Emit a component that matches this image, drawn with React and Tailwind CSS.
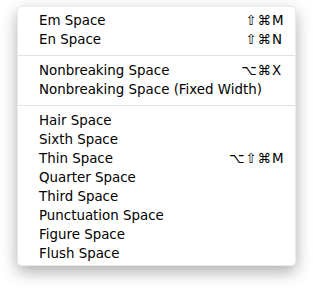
import React from "react";

const groups = [
  [
    { label: "Em Space", mods: "⇧⌘", key: "M" },
    { label: "En Space", mods: "⇧⌘", key: "N" },
  ],
  [
    { label: "Nonbreaking Space", mods: "⌥⌘", key: "X" },
    { label: "Nonbreaking Space (Fixed Width)" },
  ],
  [
    { label: "Hair Space" },
    { label: "Sixth Space" },
    { label: "Thin Space", mods: "⌥⇧⌘", key: "M" },
    { label: "Quarter Space" },
    { label: "Third Space" },
    { label: "Punctuation Space" },
    { label: "Figure Space" },
    { label: "Flush Space" },
  ],
];

function Row({ item }) {
  return (
    <div className="flex h-[19px] items-center pl-[21px] pr-[10px]">
      <span className="flex-1 whitespace-nowrap">{item.label}</span>
      {item.mods && (
        <span className="whitespace-nowrap text-right tracking-[1px]">{item.mods}</span>
      )}
      {item.key && <span className="w-[13px] whitespace-nowrap">{item.key}</span>}
    </div>
  );
}

export default function App() {
  return (
    <div className="min-h-[294px] w-[313px] bg-white pl-[17px] pt-[6px]">
      <div
        className="w-[279px] rounded-[5px] border border-[rgba(0,0,0,0.08)] bg-white pt-[4px] pb-[2px] text-[13.4px] leading-[19px] text-black shadow-[0_6px_16px_rgba(0,0,0,0.32)]"
        style={{ fontFamily: '"DejaVu Sans", "Noto Sans", sans-serif' }}
      >
        {groups.map((g, gi) => (
          <React.Fragment key={gi}>
            {gi > 0 && (
              <div className="flex h-[12px] items-center">
                <div className="h-px w-full bg-[#e3e3e3]" />
              </div>
            )}
            {g.map((item) => (
              <Row key={item.label} item={item} />
            ))}
          </React.Fragment>
        ))}
      </div>
    </div>
  );
}
